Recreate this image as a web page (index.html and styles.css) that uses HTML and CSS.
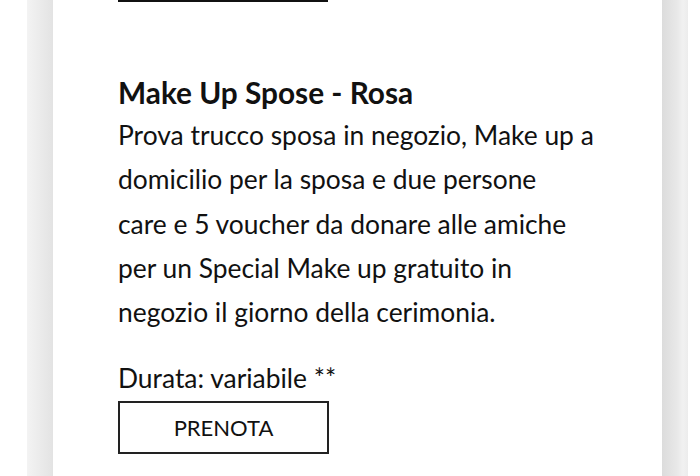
FILE: index.html
```html
<!DOCTYPE html>
<html lang="it">
<head>
<meta charset="utf-8">
<title>Make Up Spose</title>
<link rel="stylesheet" href="styles.css">
</head>
<body>
<div class="page">
  <div class="frame">
    <main class="card">
      <div class="prev-button"></div>
      <section class="service">
        <h2 class="service-title">Make Up Spose - Rosa</h2>
        <p class="service-desc">Prova trucco sposa in negozio, Make up a<br>domicilio per la sposa e due persone<br>care e 5 voucher da donare alle amiche<br>per un Special Make up gratuito in<br>negozio il giorno della cerimonia.</p>
        <p class="service-duration">Durata: variabile **</p>
        <a class="book-btn" href="#">PRENOTA</a>
      </section>
    </main>
  </div>
</div>
</body>
</html>
```
FILE: styles.css
```css
html, body {
  margin: 0;
  padding: 0;
  background: #ffffff;
  height: 100%;
}
body {
  font-family: "Lato", "Open Sans", sans-serif;
  color: #111111;
  overflow: hidden;
}
.page {
  height: 476px;
  padding-left: 27px;
}
.frame {
  width: 661px;
  height: 100%;
  background: linear-gradient(to right,
    #f3f3f3 0px, #e3e3e3 26px,
    transparent 26px, transparent 635px,
    #dcdcdc 635px, #e8e8e8 650px, #f1f1f1 656px, #ececec 661px);
  padding: 0 26px;
  box-sizing: border-box;
}
.card {
  background: #ffffff;
  height: 100%;
  padding: 0 65px;
  display: flex;
  flex-direction: column;
}
.prev-button {
  width: 210px;
  height: 0;
  border-bottom: 2px solid #111111;
}
.service {
  padding-top: 74px;
}
.service-title {
  margin: 0;
  font-size: 29.8px;
  font-weight: 700;
  line-height: 34px;
}
.service-desc {
  margin: 3px 0 0;
  font-size: 26.4px;
  line-height: 44.25px;
}
.service-duration {
  margin: 29px 0 0;
  font-size: 26.4px;
  line-height: 30px;
}
.book-btn {
  display: flex;
  align-items: center;
  justify-content: center;
  width: 211px;
  height: 53px;
  box-sizing: border-box;
  border: 2px solid #222222;
  margin-top: 8px;
  font-size: 22px;
  color: #111111;
  text-decoration: none;
}
```
